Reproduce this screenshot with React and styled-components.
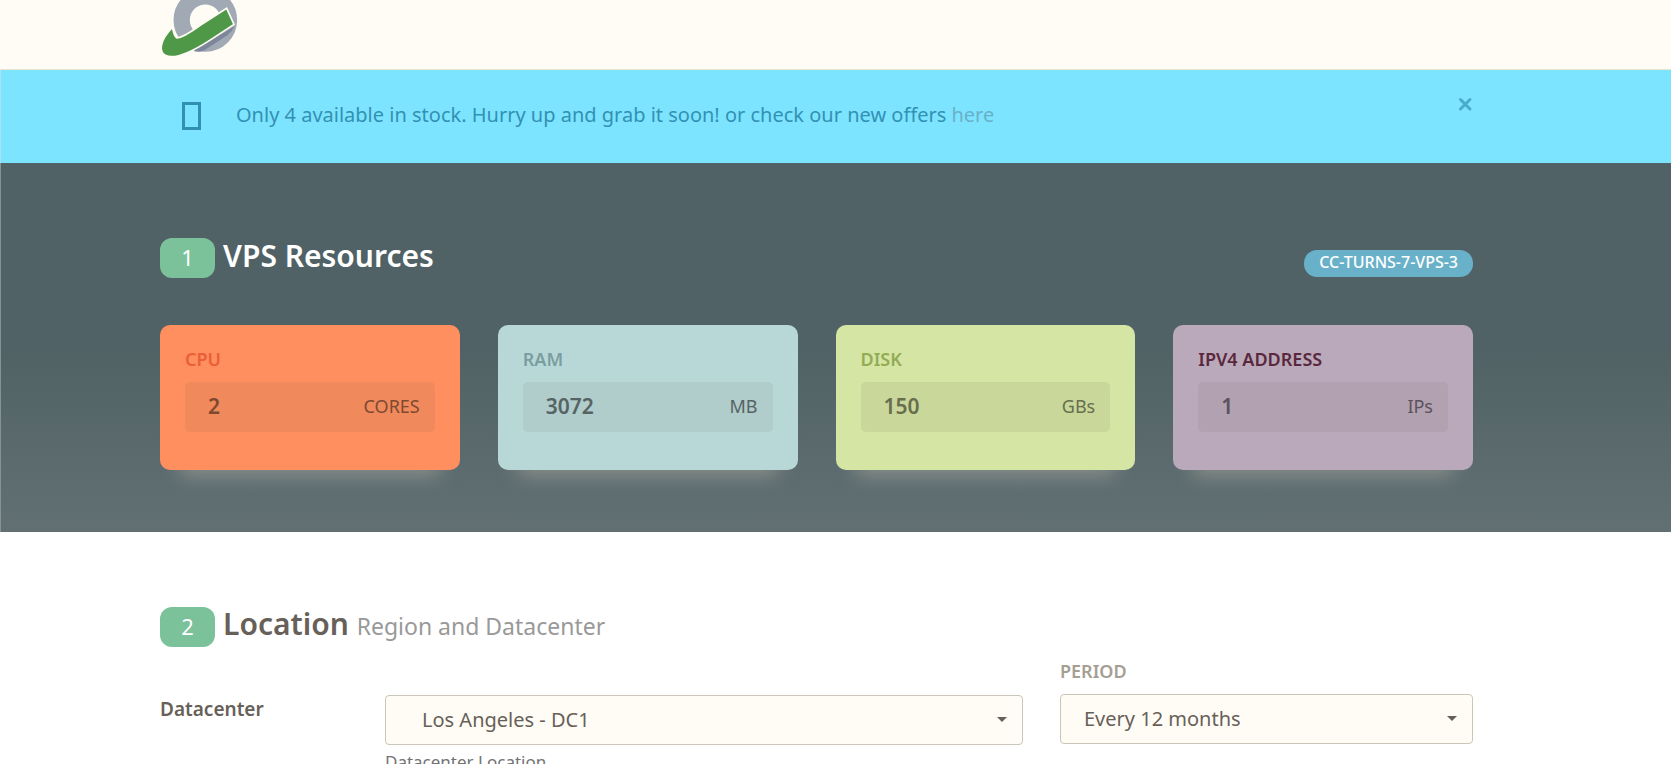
import React from 'react';
import styled, { createGlobalStyle } from 'styled-components';

const GlobalStyle = createGlobalStyle`
  * { box-sizing: border-box; }
  body {
    margin: 0;
    background: #fff;
    color: #676059;
    font-family: "Noto Sans", "Open Sans", sans-serif;
    font-size: 20px;
    line-height: 30px;
  }
`;

const Container = styled.div`
  padding: 0 198px 0 160px;
`;

const Header = styled.header`
  height: 70px;
  background: #fffcf5;
  border-bottom: 1px solid #e6e5d8;
`;

const Logo = styled.svg`
  display: block;
  width: 80px;
  height: 60px;
`;

const Alert = styled.section`
  background: #7de4ff;
  border-left: 1px solid #a9e3f3;
  color: #3291b3;
`;

const AlertRow = styled(Container)`
  display: flex;
  align-items: center;
  height: 93px;
  padding-left: 181px;
`;

const AlertGlyph = styled.svg`
  width: 19px;
  height: 28px;
  margin: 0 35px 2px 0;
`;

const AlertText = styled.p`
  flex: 1;
  margin: 0;
  padding-bottom: 4px;
`;

const AlertLink = styled.a`
  color: #69b1c9;
  text-decoration: none;
`;

const CloseButton = styled.button`
  align-self: flex-start;
  display: flex;
  margin: 27px 0 0;
  padding: 0;
  border: 0;
  background: none;
  color: #48abcc;
  cursor: pointer;
`;

const Resources = styled.section`
  padding: 75px 0 62px;
  border-left: 1px solid #869294;
  background: linear-gradient(#506265 0, #506265 50%, #627074 100%);
`;

const ResourcesInner = styled(Container)`
  padding-left: 159px;
`;

const TitleRow = styled.div`
  display: flex;
  align-items: center;
  gap: 8px;
  height: 40px;
`;

const StepBadge = styled.span`
  width: 55px;
  height: 40px;
  border-radius: 12px;
  background: #7bc29a;
  color: #fff;
  font-size: 22px;
  line-height: 38px;
  text-align: center;
`;

const Title = styled.h2`
  margin: 0;
  color: ${(p) => p.$color};
  font-size: 30px;
  font-weight: 600;
  line-height: 34px;
  padding-bottom: 5px;
`;

const Subtitle = styled.small`
  color: #999;
  font-size: 23px;
  font-weight: 400;
`;

const Pill = styled.span`
  align-self: flex-end;
  margin: 0 0 1px auto;
  padding: 0 15px 2px;
  border-radius: 13px;
  background: #69b1c9;
  color: #fff;
  font-size: 16px;
  font-weight: 500;
  line-height: 25px;
`;

const Grid = styled.div`
  display: grid;
  grid-template-columns: repeat(12, minmax(0, 1fr));
  column-gap: 37px;
`;

const Cards = styled.div`
  display: grid;
  grid-template-columns: repeat(4, minmax(0, 1fr));
  column-gap: 38px;
  margin-top: 47px;
`;

const Card = styled.div`
  padding: 17px 25px 38px;
  border-radius: 10px;
  background: ${(p) => p.$bg};
  box-shadow: 0 25px 20px -20px rgba(255, 240, 210, 0.3);
`;

const FieldLabel = styled.label`
  display: block;
  margin-bottom: 6px;
  color: ${(p) => p.$color};
  font-size: 18px;
  font-weight: 600;
  line-height: 34px;
  text-transform: uppercase;
`;

const ValueBox = styled.div`
  display: flex;
  align-items: center;
  height: 50px;
  padding: 0 15px 2px 23px;
  border-radius: 5px;
  background: rgba(103, 96, 89, 0.1);
  color: ${(p) => p.$color};
`;

const ValueInput = styled.input`
  flex: 1;
  min-width: 0;
  padding: 0;
  border: 0;
  outline: 0;
  background: none;
  color: inherit;
  font: 600 21px "Noto Sans", "Open Sans", sans-serif;
`;

const Unit = styled.span`
  font-size: 18px;
`;

const LocationSection = styled.section`
  padding-bottom: 40px;
`;

const Column = styled.div`
  grid-column: span ${(p) => p.$span};
  padding-top: ${(p) => p.$top}px;
`;

const LocationForm = styled.div`
  display: grid;
  grid-template-columns: 188px minmax(0, 1fr);
  column-gap: 37px;
  margin-top: 48px;
`;

const RowLabel = styled.label`
  font-size: 19px;
  font-weight: 600;
  line-height: 28px;
`;

const SelectWrap = styled.div`
  position: relative;
  &::after {
    content: "";
    position: absolute;
    right: 16px;
    top: 22px;
    border: 5px solid transparent;
    border-top-color: #676059;
    border-bottom: 0;
    pointer-events: none;
  }
`;

const Select = styled.select`
  display: block;
  width: 100%;
  height: 50px;
  padding: 0 40px 2px ${(p) => p.$indent}px;
  appearance: none;
  border: 1px solid #ccc5b9;
  border-radius: 4px;
  background: #fffcf5;
  color: #676059;
  font: 400 20px "Noto Sans", "Open Sans", sans-serif;
`;

const HelpText = styled.p`
  margin: 4px 0 0;
  color: #737373;
  font-size: 17px;
  line-height: 26px;
`;

const resources = [
  { id: 'cpu', label: 'CPU', value: '2', unit: 'CORES', bg: '#ff8f5e', labelColor: '#eb5e37', text: '#7f4930' },
  { id: 'ram', label: 'RAM', value: '3072', unit: 'MB', bg: '#b8d8d8', labelColor: '#7a9e9f', text: '#566364' },
  { id: 'disk', label: 'Disk', value: '150', unit: 'GBs', bg: '#d5e5a3', labelColor: '#92ac56', text: '#666e4d' },
  { id: 'ipv4', label: 'IPv4 address', value: '1', unit: 'IPs', bg: '#baa9ba', labelColor: '#5a283d', text: '#5b525b' },
];

export default function App() {
  return (
    <>
      <GlobalStyle />
      <Header>
        <Container>
          <Logo viewBox="60 0 240 180" role="img" aria-label="Company logo">
            <circle cx="196" cy="60" r="71" fill="none" stroke="#a1a9b5" strokeWidth="49" />
            <path d="M160 153 L284 78 Q276 96 262 106 L190 153 Q174 157 160 153Z" fill="#7d8799" />
            <path d="M97 82 C62 118 54 153 76 166 C105 180 156 155 209 121 L282 73 L260 25 L182 75 C155 94 131 112 111 114 C101 110 101 94 97 82Z" fill="#4e9848" stroke="#fffcf5" strokeWidth="5" />
          </Logo>
        </Container>
      </Header>
      <Alert role="alert">
        <AlertRow>
          <AlertGlyph viewBox="0 0 19 28" aria-hidden="true">
            <path d="M0 0H19V28H0ZM3 3V25H16V3Z" fill="currentColor" fillRule="evenodd" />
          </AlertGlyph>
          <AlertText>
            Only 4 available in stock. Hurry up and grab it soon! or check our new offers{' '}
            <AlertLink href="#offers">here</AlertLink>
          </AlertText>
          <CloseButton type="button" aria-label="Close">
            <svg width="15" height="15" viewBox="0 0 15 15" aria-hidden="true">
              <path d="M2.5 2.5 12 12M12 2.5 2.5 12" stroke="currentColor" strokeWidth="3" strokeLinecap="round" />
            </svg>
          </CloseButton>
        </AlertRow>
      </Alert>
      <Resources>
        <ResourcesInner>
          <TitleRow>
            <StepBadge>1</StepBadge>
            <Title $color="#fff">VPS Resources</Title>
            <Pill>CC-TURNS-7-VPS-3</Pill>
          </TitleRow>
          <Cards>
            {resources.map((r) => (
              <Card key={r.id} $bg={r.bg}>
                <FieldLabel htmlFor={r.id} $color={r.labelColor}>{r.label}</FieldLabel>
                <ValueBox $color={r.text}>
                  <ValueInput id={r.id} defaultValue={r.value} readOnly />
                  <Unit>{r.unit}</Unit>
                </ValueBox>
              </Card>
            ))}
          </Cards>
        </ResourcesInner>
      </Resources>
      <LocationSection>
        <Container>
          <Grid>
            <Column $span={8} $top={75}>
              <TitleRow>
                <StepBadge>2</StepBadge>
                <Title $color="#676059">
                  Location <Subtitle>Region and Datacenter</Subtitle>
                </Title>
              </TitleRow>
              <LocationForm>
                <RowLabel htmlFor="datacenter">Datacenter</RowLabel>
                <div>
                  <SelectWrap>
                    <Select id="datacenter" $indent={36}>
                      <option>Los Angeles - DC1</option>
                    </Select>
                  </SelectWrap>
                  <HelpText>Datacenter Location</HelpText>
                </div>
              </LocationForm>
            </Column>
            <Column $span={4} $top={122}>
              <FieldLabel htmlFor="period" $color="#a49e93">Period</FieldLabel>
              <SelectWrap>
                <Select id="period" $indent={23}>
                  <option>Every 12 months</option>
                </Select>
              </SelectWrap>
            </Column>
          </Grid>
        </Container>
      </LocationSection>
    </>
  );
}
